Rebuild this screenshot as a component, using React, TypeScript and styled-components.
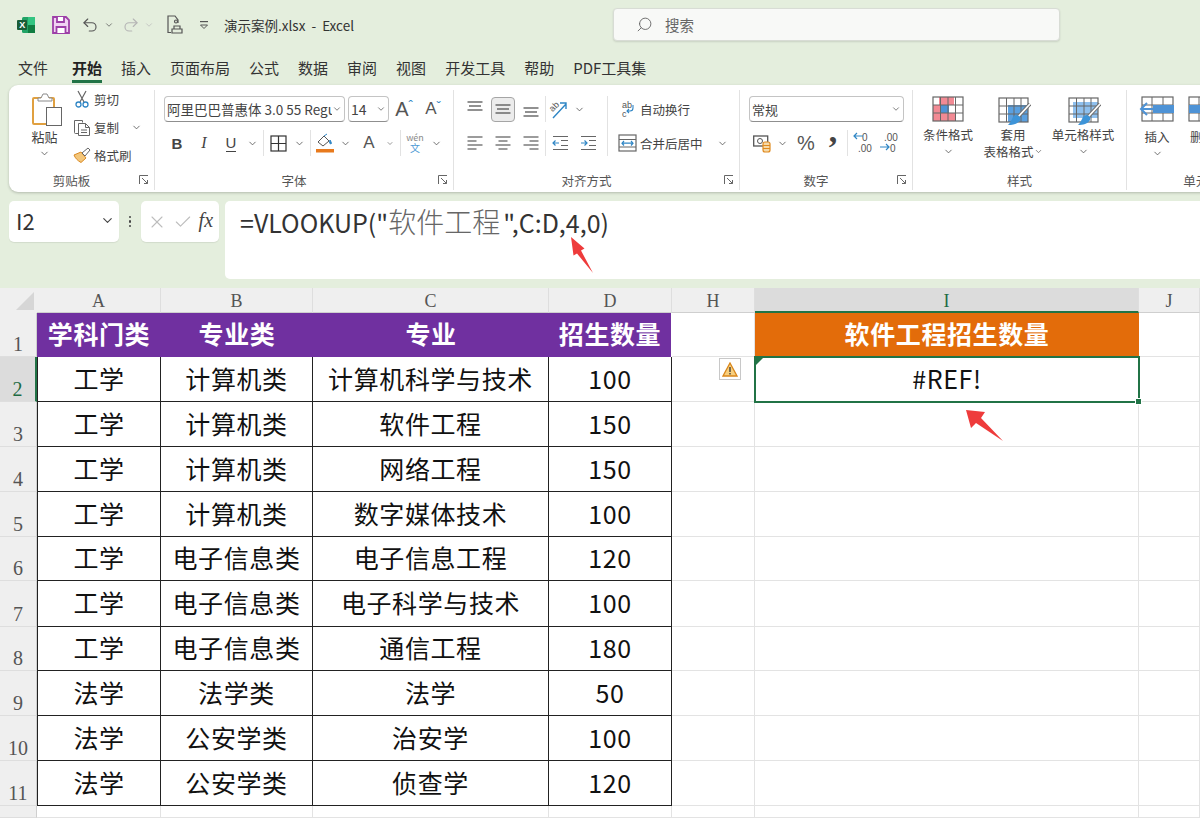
import React from 'react';
import styled, {createGlobalStyle} from 'styled-components';
import {ChevronDown, Search, Undo2, Redo2, X, Check} from 'lucide-react';

const sans = `"Noto Sans CJK SC", "Noto Sans", sans-serif`;

const GlobalStyle = createGlobalStyle`
  html, body { margin:0; padding:0; background:#e4eedd; }
  body { font-family:${sans}; color:#333; }
`;

const rowHeights = [44,45,45,45,45,44,46,44,45,45,45];
const tableHead = ['学科门类','专业类','专业','招生数量'];
const tableRows = [
  ['工学','计算机类','计算机科学与技术','100'],
  ['工学','计算机类','软件工程','150'],
  ['工学','计算机类','网络工程','150'],
  ['工学','计算机类','数字媒体技术','100'],
  ['工学','电子信息类','电子信息工程','120'],
  ['工学','电子信息类','电子科学与技术','100'],
  ['工学','电子信息类','通信工程','180'],
  ['法学','法学类','法学','50'],
  ['法学','公安学类','治安学','100'],
  ['法学','公安学类','侦查学','120'],
];

function Chev({size=11,color='#555'}:{size?:number,color?:string}){
  return <ChevronDown size={size} color={color} strokeWidth={1.8}/>;
}

function PasteIcon(){
  return (
    <svg width="30" height="33" viewBox="0 0 30 33" fill="none">
      <path d="M5 5h16a1 1 0 0 1 1 1v24a1 1 0 0 1-1 1H2a1 1 0 0 1-1-1V6a1 1 0 0 1 1-1z" stroke="#e0a040" strokeWidth="2"/>
      <path d="M6 8V5h3l2-4h4l2 4h3v3z" fill="#fff" stroke="#8a8a8a"/>
      <rect x="14.5" y="14.5" width="15" height="18" fill="#fff" stroke="#666"/>
    </svg>
  );
}
function ScissorsIcon(){
  return (
    <svg width="14" height="18" viewBox="0 0 14 18" fill="none">
      <path d="M3 1l6 11M11 1L5 12" stroke="#666" strokeWidth="1.2"/>
      <circle cx="3.5" cy="14.5" r="2.5" stroke="#2f86c5" strokeWidth="1.3"/>
      <circle cx="10.5" cy="14.5" r="2.5" stroke="#2f86c5" strokeWidth="1.3"/>
    </svg>
  );
}
function CopyIcon(){
  return (
    <svg width="18" height="17" viewBox="0 0 18 17" fill="none" stroke="#666">
      <path d="M5.5 14.5h-3a1 1 0 0 1-1-1v-12h8v2"/>
      <path d="M5.5 4.5h7l4 4v8h-11z" fill="#fff"/>
      <path d="M12.5 4.5v4h4M8 11h6M8 13.5h6"/>
    </svg>
  );
}
function BrushIcon(){
  return (
    <svg width="18" height="16" viewBox="0 0 18 16" fill="none">
      <path d="M1 8l7-3 5 6-5 4.500C5 14 2 11 1 8z" fill="#f3c67a" stroke="#d98a25"/>
      <path d="M9 6l6-5 2 2-5 6z" fill="#fff" stroke="#666"/>
    </svg>
  );
}
function BordersIcon(){
  return (
    <svg width="17" height="17" viewBox="0 0 17 17" fill="none" stroke="#333" strokeWidth="1.2">
      <rect x="1" y="1" width="15" height="15"/><path d="M8.500 1v15M1 8.500h15"/>
    </svg>
  );
}
function FillIcon(){
  return (
    <svg width="18" height="20" viewBox="0 0 18 20" fill="none">
      <path d="M2 9l6-6 5 5-6 5z" fill="#fff" stroke="#555"/>
      <path d="M8 3l3-2M14 7c1 2 2 3 1 4-1 0-2-1-1-4z" stroke="#2f86c5" fill="#2f86c5"/>
      <rect x="0" y="16" width="18" height="3.500" fill="#e87a1d"/>
    </svg>
  );
}
function AlignLines({kind}:{kind:'top'|'mid'|'bot'}){
  const y = kind === 'top' ? [2,6,10] : kind === 'mid' ? [5,9,13] : [8,12,16];
  return (
    <svg width="16" height="18" viewBox="0 0 16 18" stroke="#555" strokeWidth="1.3">
      {y.map((v,i) => <line key={i} x1={i===1?2:0.5} x2={i===1?14:15.5} y1={v} y2={v}/>)}
    </svg>
  );
}
function HAlign({kind}:{kind:'l'|'c'|'r'}){
  const w = [15,9,15,9];
  return (
    <svg width="16" height="14" viewBox="0 0 16 14" stroke="#666" strokeWidth="1.3">
      {w.map((v,i) => {
        const x1 = kind === 'l' ? 0.5 : kind === 'c' ? (16-v)/2 : 15.5-v;
        return <line key={i} x1={x1} x2={x1+v} y1={1+i*4} y2={1+i*4}/>;
      })}
    </svg>
  );
}
function OrientIcon(){
  return (
    <svg width="20" height="20" viewBox="0 0 20 20" fill="none">
      <path d="M4 19L17 5M11 4h6v6" stroke="#2f86c5" strokeWidth="1.4"/>
      <text x="1" y="11" fontSize="9" fill="#555" fontFamily="Liberation Sans" transform="rotate(-45 5 9)">ab</text>
    </svg>
  );
}
function IndentIcon({dir}:{dir:'out'|'in'}){
  return (
    <svg width="17" height="16" viewBox="0 0 17 16" fill="none" stroke="#666" strokeWidth="1.2">
      <path d="M1 1.500h15M1 14.500h15M9 5.500h7M9 10.500h7"/>
      <path d={dir === 'out' ? 'M7 8H1M3.500 5.500L1 8l2.500 2.500' : 'M1 8h6M4.500 5.500L7 8l-2.500 2.500'} stroke="#2f86c5"/>
    </svg>
  );
}
function WrapIcon(){
  return (
    <svg width="19" height="18" viewBox="0 0 19 18" fill="none">
      <text x="4" y="8" fontSize="9" fill="#555" fontFamily="Liberation Sans">ab</text>
      <text x="4" y="17" fontSize="9" fill="#555" fontFamily="Liberation Sans">c</text>
      <path d="M15 5v3a3 3 0 0 1-3 3H9M11 9l-2 2 2 2" stroke="#2f86c5" strokeWidth="1.1"/>
    </svg>
  );
}
function MergeIcon(){
  return (
    <svg width="19" height="18" viewBox="0 0 19 18" fill="none" stroke="#2f86c5" strokeWidth="1.2">
      <rect x="1" y="1" width="17" height="16" stroke="#666"/>
      <path d="M1 5.500h17M1 13h17" stroke="#666"/>
      <path d="M4 9.200h11M6 7l-2 2.200L6 11.500M13 7l2 2.200-2 2.300"/>
    </svg>
  );
}
function AccountingIcon(){
  return (
    <svg width="18" height="20" viewBox="0 0 18 20" fill="none">
      <rect x="0.700" y="3" width="14" height="10" stroke="#555" strokeWidth="1.300"/>
      <circle cx="7" cy="8" r="2.500" stroke="#555"/>
      <rect x="10" y="9" width="7" height="10" rx="2" fill="#f5d9a8" stroke="#e08a1e" strokeWidth="1.200"/>
      <path d="M10 12.500h7M10 15.500h7" stroke="#e08a1e"/>
    </svg>
  );
}
function DecimalIcon({up}:{up:boolean}){
  return (
    <svg width="25" height="24" viewBox="0 0 25 24" fill="none">
      <text x={up?6:10} y="10" fontSize="10" fill="#555" fontFamily="Liberation Sans">{up?'.00':'0'}</text>
      <text x={up?12:6} y="21" fontSize="10" fill="#555" fontFamily="Liberation Sans">{up?'0':'.00'}</text>
      <path d={up ? 'M2 16h9M8 13l3 3-3 3' : 'M11 5H2M5 2L2 5l3 3'} stroke="#2f86c5" strokeWidth="1.200"/>
    </svg>
  );
}
function BrushOverlay(){
  return (
    <g>
      <path d="M35 8L22 22" stroke="#6e6e6e" strokeWidth="3.600"/>
      <path d="M35 8L22 22" stroke="#fff" strokeWidth="1.800"/>
      <path d="M22 19c3 1 4 3 3 5-2 4-7 5-12 5 2-2 3-4 4-6 1-3 3-4 5-4z" fill="#3d94d8"/>
    </g>
  );
}
function StyleTableIcon({fill,x,y,w,h}:{fill:string,x:number,y:number,w:number,h:number}){
  return (
    <svg width="36" height="30" viewBox="0 0 36 30" fill="none">
      <rect x={x} y={y} width={w} height={h} fill={fill}/>
      <rect x="4" y="2" width="29" height="24" stroke="#666" strokeWidth="1.200"/>
      <path d="M11.500 2v24M19 2v24M26 2v24M4 10h29M4 18h29" stroke="#666"/>
      <BrushOverlay/>
    </svg>
  );
}
function CondIcon(){
  return (
    <svg width="32" height="26" viewBox="0 0 32 26" fill="none">
      <rect x="7" y="1" width="15" height="8" fill="#f28a94"/>
      <rect x="1" y="17" width="22" height="8" fill="#f28a94"/>
      <rect x="1" y="9" width="7" height="8" fill="#f28a94"/>
      <rect x="8" y="9" width="9" height="8" fill="#4e93d6"/>
      <rect x="1" y="1" width="30" height="24" stroke="#666" strokeWidth="1.200"/>
      <path d="M8.500 1v24M16 1v24M23.500 1v24M1 9h30M1 17h30" stroke="#666"/>
    </svg>
  );
}
function InsertIcon(){
  return (
    <svg width="36" height="26" viewBox="0 0 36 26" fill="none">
      <rect x="3" y="1" width="31" height="24" stroke="#666" strokeWidth="1.200"/>
      <path d="M13 1v24M24 1v24M3 9h31M3 17h31" stroke="#666"/>
      <rect x="14" y="9" width="21" height="8" fill="#4e93d6"/>
      <path d="M14 13H3M8 7l-6 6 6 6" stroke="#4e93d6" strokeWidth="2" fill="none"/>
    </svg>
  );
}
function DeleteIcon(){
  return (
    <svg width="30" height="26" viewBox="0 0 30 26" fill="none">
      <rect x="1" y="1" width="31" height="24" stroke="#666" strokeWidth="1.200"/>
      <path d="M11 1v24M22 1v24M1 9h31M1 17h31" stroke="#666"/>
      <rect x="1" y="9" width="21" height="8" fill="#4e93d6"/>
    </svg>
  );
}
function LauncherIcon(){
  return (
    <svg width="10" height="10" viewBox="0 0 10 10" fill="none" stroke="#666">
      <path d="M0.500 9V0.500H9M3 3l5.500 5.500M8.500 5v3.500H5"/>
    </svg>
  );
}
function ExcelLogo(){
  return (
    <svg width="18" height="18" viewBox="0 0 18 18">
      <rect x="5" y="1" width="13" height="16" rx="1.500" fill="#21a366"/>
      <rect x="11" y="1" width="7" height="8" fill="#33c481"/>
      <rect x="11" y="9" width="7" height="8" fill="#107c41"/>
      <rect x="0" y="4" width="10" height="10" rx="1" fill="#185c37"/>
      <text x="2.300" y="12" fontSize="9" fontWeight="700" fill="#fff" fontFamily="Liberation Sans">X</text>
    </svg>
  );
}
function SaveIcon(){
  return (
    <svg width="18" height="18" viewBox="0 0 18 18" fill="#f1d3f3" stroke="#9d3fa8" strokeWidth="1.800">
      <path d="M1 1h13l3 3v13H1z"/>
      <path d="M5 1v5h7V1M4.500 17v-6h9v6" fill="#fff"/>
    </svg>
  );
}
function PreviewIcon(){
  return (
    <svg width="16" height="19" viewBox="0 0 16 19" fill="none" stroke="#555" strokeWidth="1.200">
      <path d="M4 17.500H1V1h7l3 4v3"/>
      <path d="M5 14h10v4H5zM7 14v-3h6v3"/>
      <circle cx="9" cy="6.500" r="1.500"/>
    </svg>
  );
}
function QuickMenuIcon(){
  return (
    <svg width="10" height="10" viewBox="0 0 10 10" fill="#555">
      <rect x="1" y="1" width="8" height="1.200"/>
      <path d="M1.500 5h7L5 8.500z" fill="none" stroke="#555"/>
    </svg>
  );
}
function WarnIcon(){
  return (
    <svg width="16" height="15" viewBox="0 0 16 15">
      <path d="M8 1l7 13H1z" fill="#f8cf7e" stroke="#d9861a" strokeWidth="1.300"/>
      <path d="M8 5v5M8 11v1.500" stroke="#333" strokeWidth="1.300"/>
    </svg>
  );
}

export default function App(){
  return (
    <>
      <GlobalStyle/>
      <Page>
        <TitleBar>
          <TitleLeft>
            <ExcelLogo/>
            <QuickSlot $w={18} $ml={17}><SaveIcon/></QuickSlot>
            <QuickSlot $w={18} $ml={11}><Undo2 size={18} color="#555" strokeWidth={1.500}/></QuickSlot>
            <QuickSlot $w={12} $ml={4}><Chev size={10}/></QuickSlot>
            <QuickSlot $w={18} $ml={7}><Redo2 size={18} color="#b5b5b5" strokeWidth={1.500}/></QuickSlot>
            <QuickSlot $w={10} $ml={4}><Chev size={10} color="#bbb"/></QuickSlot>
            <QuickSlot $w={16} $ml={13}><PreviewIcon/></QuickSlot>
            <QuickSlot $w={10} $ml={16}><QuickMenuIcon/></QuickSlot>
            <FileName>演示案例.xlsx&nbsp; - &nbsp;Excel</FileName>
          </TitleLeft>
          <SearchBox>
            <MirrorIcon><Search size={17} color="#666" strokeWidth={1.300}/></MirrorIcon>
            <span>搜索</span>
          </SearchBox>
        </TitleBar>

        <Tabs>
          {['文件','开始','插入','页面布局','公式','数据','审阅','视图','开发工具','帮助','PDF工具集'].map(t => (
            <Tab key={t} $active={t === '开始'}>{t}</Tab>
          ))}
        </Tabs>

        <Ribbon>
          <Group $w={146}>
            <GroupBody>
              <ClipRow>
                <PasteCol>
                  <PasteIconWrap><PasteIcon/></PasteIconWrap>
                  <PasteLabel>粘贴</PasteLabel>
                  <Chev/>
                </PasteCol>
                <ClipCol>
                  <ClipItem><ClipIcon><ScissorsIcon/></ClipIcon>剪切</ClipItem>
                  <ClipItem><ClipIcon><CopyIcon/></ClipIcon>复制<ClipChev><Chev/></ClipChev></ClipItem>
                  <ClipItem><ClipIcon><BrushIcon/></ClipIcon>格式刷</ClipItem>
                </ClipCol>
              </ClipRow>
            </GroupBody>
            <GroupFooter><FooterLabel>剪贴板</FooterLabel><Launcher><LauncherIcon/></Launcher></GroupFooter>
          </Group>

          <Group $w={299}>
            <GroupBody $pl={9} $pt={6}>
              <ToolRow>
                <SelectBox $w={181}><SelectText $size={13.500}>阿里巴巴普惠体 3.0 55 Regular</SelectText><Chev size={10}/></SelectBox>
                <SelectBox $w={41} $ml={3}><SelectText $size={14}>14</SelectText><Chev size={10}/></SelectBox>
                <Tool $w={30}><GrowA $size={20}>A<Caret>ˆ</Caret></GrowA></Tool>
                <Tool $w={28}><GrowA $size={17}>A<Caret>ˇ</Caret></GrowA></Tool>
              </ToolRow>
              <ToolRow $mt={8}>
                <Tool $w={26}><BoldB>B</BoldB></Tool>
                <Tool $w={28}><ItalicI>I</ItalicI></Tool>
                <Tool $w={26}><UnderU>U</UnderU></Tool>
                <Tool $w={16}><Chev/></Tool>
                <ToolSep $w={6}/>
                <Tool $w={24}><BordersIcon/></Tool>
                <Tool $w={18}><Chev/></Tool>
                <ToolSep $w={4}/>
                <Tool $w={26}><FillIcon/></Tool>
                <Tool $w={14}><Chev/></Tool>
                <Tool $w={34}><FontA>A</FontA></Tool>
                <Tool $w={8}><Chev/></Tool>
                <ToolSep $w={12}/>
                <Tool $w={18}><WenIcon><span>wén</span><b>文</b></WenIcon></Tool>
                <Tool $w={24}><Chev/></Tool>
              </ToolRow>
            </GroupBody>
            <GroupFooter><FooterLabel>字体</FooterLabel><Launcher><LauncherIcon/></Launcher></GroupFooter>
          </Group>

          <Group $w={286}>
            <GroupBody $pl={7} $pt={6}>
              <AlignBody>
                <AlignCol>
                  <ToolRow>
                    <Tool $w={28}><AlignLines kind="top"/></Tool>
                    <Tool $w={28}><Pressed><AlignLines kind="mid"/></Pressed></Tool>
                    <Tool $w={28}><AlignLines kind="bot"/></Tool>
                    <ToolSep $w={1}/>
                    <Tool $w={26}><OrientIcon/></Tool>
                    <Tool $w={14}><Chev/></Tool>
                  </ToolRow>
                  <ToolRow $mt={8}>
                    <Tool $w={28}><HAlign kind="l"/></Tool>
                    <Tool $w={28}><HAlign kind="c"/></Tool>
                    <Tool $w={28}><HAlign kind="r"/></Tool>
                    <ToolSep $w={1}/>
                    <Tool $w={29}><IndentIcon dir="out"/></Tool>
                    <Tool $w={27}><IndentIcon dir="in"/></Tool>
                  </ToolRow>
                </AlignCol>
                <AlignDivider/>
                <AlignCol>
                  <TextTool><WrapIcon/><span>自动换行</span></TextTool>
                  <TextTool $mt={8}><MergeIcon/><span>合并后居中</span><ClipChev $ml={11}><Chev/></ClipChev></TextTool>
                </AlignCol>
              </AlignBody>
            </GroupBody>
            <GroupFooter><FooterLabel>对齐方式</FooterLabel><Launcher><LauncherIcon/></Launcher></GroupFooter>
          </Group>

          <Group $w={173}>
            <GroupBody $pl={9} $pt={6}>
              <ToolRow>
                <SelectBox $w={155}><SelectText>常规</SelectText><Chev size={10}/></SelectBox>
              </ToolRow>
              <ToolRow $mt={8}>
                <Tool $w={26}><AccountingIcon/></Tool>
                <Tool $w={14}><Chev/></Tool>
                <Tool $w={34}><Percent>%</Percent></Tool>
                <Tool $w={20}><Comma>,</Comma></Tool>
                <ToolSep $w={8}/>
                <Tool $w={26}><DecimalIcon up={false}/></Tool>
                <Tool $w={26}><DecimalIcon up={true}/></Tool>
              </ToolRow>
            </GroupBody>
            <GroupFooter><FooterLabel>数字</FooterLabel><Launcher><LauncherIcon/></Launcher></GroupFooter>
          </Group>

          <Group $w={214}>
            <GroupBody $pt={6}>
              <LargeRow>
                <LargeButton $w={70}>
                  <LargeIcon><CondIcon/></LargeIcon>
                  <LargeLabel>条件格式</LargeLabel>
                  <LargeChev><Chev/></LargeChev>
                </LargeButton>
                <LargeButton $w={60}>
                  <LargeIcon><StyleTableIcon fill="#5aa0e0" x={13} y={9} w={20} h={17}/></LargeIcon>
                  <LargeLabel>套用</LargeLabel>
                  <LargeLabel>表格格式 <Chev size={9}/></LargeLabel>
                </LargeButton>
                <LargeButton $w={80}>
                  <LargeIcon><StyleTableIcon fill="#8fc0ee" x={8} y={6} w={25} h={16}/></LargeIcon>
                  <LargeLabel>单元格样式</LargeLabel>
                  <LargeChev><Chev/></LargeChev>
                </LargeButton>
              </LargeRow>
            </GroupBody>
            <GroupFooter><FooterLabel>样式</FooterLabel></GroupFooter>
          </Group>

          <Group $w={150} $last>
            <GroupBody $pt={6}>
              <LargeRow>
                <LargeButton $w={60}>
                  <LargeIcon $h={32}><InsertIcon/></LargeIcon>
                  <LargeLabel>插入</LargeLabel>
                  <LargeChev><Chev/></LargeChev>
                </LargeButton>
                <LargeButton $w={31}>
                  <LargeIcon $h={32}><DeleteIcon/></LargeIcon>
                  <LargeLabel>删除</LargeLabel>
                </LargeButton>
              </LargeRow>
            </GroupBody>
            <GroupFooter><FooterLabel>单元格</FooterLabel></GroupFooter>
          </Group>
        </Ribbon>

        <FormulaBar>
          <NameBox><span>I2</span><Chev size={15} color="#444"/></NameBox>
          <Dots><i/><i/><i/></Dots>
          <FxBox>
            <X size={20} color="#bdbdbd" strokeWidth={1.300}/>
            <Check size={20} color="#bdbdbd" strokeWidth={1.300}/>
            <FxText>fx</FxText>
          </FxBox>
          <FormulaInput>=VLOOKUP("<FormulaCjk>软件工程</FormulaCjk>",C:D,4,0)</FormulaInput>
        </FormulaBar>

        <Sheet>
          <Corner><CornerTriangle/></Corner>
          {['A','B','C','D','H','I','J'].map(c => <ColHead key={c} $active={c === 'I'}>{c}</ColHead>)}

          {rowHeights.map((_, r) => (
            <React.Fragment key={r}>
              <RowHead $active={r === 1}>{r + 1}</RowHead>
              {r === 0 && tableHead.map(h => <HeadCell key={h}>{h}</HeadCell>)}
              {r > 0 && tableRows[r - 1].map((v, i) => <DataCell key={i} $first={i === 0}>{v}</DataCell>)}
              <BlankCell>
                {r === 1 && <WarnBadge><WarnIcon/></WarnBadge>}
              </BlankCell>
              {r === 0 && <OrangeCell>软件工程招生数量</OrangeCell>}
              {r === 1 && <ActiveCell>#REF!<ErrorMark/><FillHandle/></ActiveCell>}
              {r > 1 && <BlankCell/>}
              <BlankCell/>
            </React.Fragment>
          ))}

          <RowHead/>
          {[0,1,2,3,4,5,6].map(i => <BlankCell key={i}/>)}

          <ArrowOne width="26" height="40" viewBox="0 0 26 40">
            <path d="M1 1L14.500 12.500L11 14.500L23 37L7 17.500L3.500 19.500Z" fill="#ee3b3b"/>
          </ArrowOne>
          <ArrowTwo width="40" height="34" viewBox="0 0 40 34">
            <path d="M1 1L20 3 16 9 38 32 11 14 6 19z" fill="#ee3b3b"/>
          </ArrowTwo>
        </Sheet>
      </Page>
    </>
  );
}

const Page = styled.div`
  position:relative;
  width:1200px;
  height:818px;
  overflow:hidden;
  background:#e4eedd;
  display:flex;
  flex-direction:column;
`;

const TitleBar = styled.div`
  height:49px;
  display:flex;
  align-items:center;
  flex:none;
`;
const TitleLeft = styled.div`
  width:613px;
  padding-left:17px;
  box-sizing:border-box;
  display:flex;
  align-items:center;
`;
const QuickSlot = styled.div<{$w:number,$ml:number}>`
  width:${p => p.$w}px;
  margin-left:${p => p.$ml}px;
  display:flex;
  justify-content:center;
  align-items:center;
`;
const FileName = styled.div`
  margin-left:15px;
  font-size:13.5px;
  color:#333;
  white-space:nowrap;
`;
const SearchBox = styled.div`
  width:447px;
  height:33px;
  box-sizing:border-box;
  background:#f8f9f7;
  border:1px solid #d8dcd5;
  border-radius:4px;
  box-shadow:0 1px 2px rgba(0,0,0,0.12);
  display:flex;
  align-items:center;
  padding-left:22px;
  gap:12px;
  font-size:14.5px;
  color:#666;
`;
const MirrorIcon = styled.div`
  display:flex;
  transform:scaleX(-1);
`;

const Tabs = styled.div`
  height:36px;
  padding-left:18px;
  display:flex;
  gap:19px;
  flex:none;
  & > :first-child{
    margin-right:5px;
  }
`;
const Tab = styled.div<{$active?:boolean}>`
  height:24px;
  margin-top:7px;
  line-height:24px;
  font-size:15px;
  white-space:nowrap;
  color:${p => p.$active ? '#222' : '#333'};
  font-weight:${p => p.$active ? 700 : 400};
  border-bottom:${p => p.$active ? '3px solid #217346' : '3px solid transparent'};
`;

const Ribbon = styled.div`
  margin-left:9px;
  width:1300px;
  height:107px;
  box-sizing:border-box;
  padding:5px 0 2px;
  background:#fff;
  border-radius:9px 0 0 9px;
  box-shadow:0 1px 3px rgba(0,0,0,0.22);
  display:flex;
  flex:none;
  font-size:12.5px;
  color:#444;
`;
const Group = styled.div<{$w:number,$last?:boolean}>`
  width:${p => p.$w}px;
  flex:none;
  box-sizing:border-box;
  display:flex;
  flex-direction:column;
  border-right:${p => p.$last ? 'none' : '1px solid #e2e2e2'};
`;
const GroupBody = styled.div<{$pl?:number,$pt?:number}>`
  height:81px;
  box-sizing:border-box;
  padding-left:${p => p.$pl ?? 0}px;
  padding-top:${p => p.$pt ?? 0}px;
`;
const GroupFooter = styled.div`
  height:18px;
  display:flex;
  align-items:center;
`;
const FooterLabel = styled.div`
  flex:1;
  text-align:center;
  white-space:nowrap;
  color:#555;
`;
const Launcher = styled.div`
  width:20px;
  display:flex;
  justify-content:center;
`;

const ClipRow = styled.div`
  display:flex;
`;
const PasteCol = styled.div`
  width:61px;
  box-sizing:border-box;
  padding-left:10px;
  display:flex;
  flex-direction:column;
  align-items:center;
`;
const PasteIconWrap = styled.div`
  box-sizing:border-box;
  height:35px;
  margin-left:4px;
  padding-top:3px;
`;
const PasteLabel = styled.div`
  margin-top:1px;
  font-size:13px;
  line-height:22px;
`;
const ClipCol = styled.div`
  display:flex;
  flex-direction:column;
  gap:8px;
  margin-top:-1px;
`;
const ClipItem = styled.div`
  height:20px;
  display:flex;
  align-items:center;
  white-space:nowrap;
`;
const ClipIcon = styled.div`
  width:24px;
  display:flex;
  justify-content:center;
`;
const ClipChev = styled.div<{$ml?:number}>`
  margin-left:${p => p.$ml ?? 12}px;
  display:flex;
`;

const ToolRow = styled.div<{$mt?:number}>`
  display:flex;
  align-items:center;
  height:26px;
  margin-top:${p => p.$mt ?? 0}px;
`;
const Tool = styled.div<{$w:number}>`
  width:${p => p.$w}px;
  height:26px;
  flex:none;
  display:flex;
  align-items:center;
  justify-content:center;
`;
const ToolSep = styled.div<{$w:number}>`
  width:${p => p.$w}px;
  height:26px;
  flex:none;
  &::after{
    content:'';
    display:block;
    width:1px;
    height:100%;
    margin:0 auto;
    background:#e2e2e2;
  }
`;
const SelectBox = styled.div<{$w:number,$ml?:number}>`
  width:${p => p.$w}px;
  height:26px;
  margin-left:${p => p.$ml ?? 0}px;
  flex:none;
  box-sizing:border-box;
  border:1px solid #c4c4c4;
  border-bottom-color:#8f8f8f;
  border-radius:4px;
  display:flex;
  align-items:center;
  justify-content:space-between;
  padding:0 2px;
  overflow:hidden;
`;
const SelectText = styled.div<{$size?:number}>`
  flex:1;
  min-width:0;
  overflow:hidden;
  white-space:nowrap;
  font-size:${p => p.$size ?? 13}px;
  color:#444;
`;
const GrowA = styled.div<{$size:number}>`
  display:flex;
  font-family:"Liberation Sans", sans-serif;
  font-size:${p => p.$size}px;
  color:#555;
`;
const Caret = styled.span`
  font-size:13px;
  line-height:15px;
  color:#2f86c5;
`;
const BoldB = styled.div`
  font-family:"Liberation Sans", sans-serif;
  font-weight:700;
  font-size:15px;
  color:#444;
`;
const ItalicI = styled.div`
  font-family:"Liberation Serif", serif;
  font-style:italic;
  font-size:16px;
  color:#444;
`;
const UnderU = styled.div`
  font-family:"Liberation Sans", sans-serif;
  font-size:15px;
  line-height:16px;
  color:#444;
  border-bottom:1px solid #444;
`;
const FontA = styled.div`
  font-family:"Liberation Sans", sans-serif;
  font-size:17px;
  color:#555;
`;
const WenIcon = styled.div`
  display:flex;
  flex-direction:column;
  align-items:center;
  line-height:9px;
  font-size:9px;
  color:#888;
  & > b{
    font-weight:400;
    font-size:10px;
    line-height:11px;
    color:#4d9ad5;
  }
`;
const Pressed = styled.div`
  width:24px;
  height:25px;
  box-sizing:border-box;
  background:#ececec;
  border:1px solid #a5a5a5;
  border-radius:4px;
  display:flex;
  align-items:center;
  justify-content:center;
`;
const AlignBody = styled.div`
  display:flex;
`;
const AlignCol = styled.div`
  display:flex;
  flex-direction:column;
`;
const AlignDivider = styled.div`
  width:1px;
  height:60px;
  margin:0 10px 0 5px;
  background:#e2e2e2;
`;
const TextTool = styled.div<{$mt?:number}>`
  height:26px;
  margin-top:${p => p.$mt ?? 0}px;
  display:flex;
  align-items:center;
  gap:3px;
  white-space:nowrap;
`;
const Percent = styled.div`
  font-family:"Liberation Sans", sans-serif;
  font-size:20px;
  color:#555;
`;
const Comma = styled.div`
  font-family:"Liberation Serif", serif;
  font-weight:700;
  font-size:34px;
  line-height:30px;
  margin-top:-24px;
  color:#444;
`;
const LargeRow = styled.div`
  display:flex;
`;
const LargeButton = styled.div<{$w:number}>`
  width:${p => p.$w}px;
  flex:none;
  display:flex;
  flex-direction:column;
  align-items:center;
`;
const LargeIcon = styled.div<{$h?:number}>`
  height:${p => p.$h ?? 30}px;
`;
const LargeLabel = styled.div`
  height:17px;
  line-height:17px;
  white-space:nowrap;
  display:flex;
  align-items:center;
`;
const LargeChev = styled.div`
  height:17px;
  display:flex;
  align-items:center;
`;

const FormulaBar = styled.div`
  height:88px;
  margin-top:8px;
  padding-left:9px;
  display:flex;
  flex:none;
`;
const NameBox = styled.div`
  width:110px;
  height:41px;
  box-sizing:border-box;
  margin-top:1px;
  background:#fff;
  border-radius:5px;
  box-shadow:0 1px 1px rgba(0,0,0,0.08);
  padding:0 4px 3px 7px;
  display:flex;
  align-items:center;
  justify-content:space-between;
  font-size:22px;
  color:#333;
`;
const Dots = styled.div`
  width:22px;
  height:41px;
  margin-top:1px;
  display:flex;
  flex-direction:column;
  align-items:center;
  justify-content:center;
  gap:2px;
  & > i{
    width:2.500px;
    height:2.500px;
    border-radius:50%;
    background:#444;
  }
`;
const FxBox = styled.div`
  width:78px;
  height:41px;
  box-sizing:border-box;
  margin-top:1px;
  background:#fff;
  border-radius:5px;
  box-shadow:0 1px 1px rgba(0,0,0,0.08);
  padding:0 3px 0 3px;
  display:flex;
  align-items:center;
  justify-content:space-around;
`;
const FxText = styled.div`
  font-family:"Liberation Serif", serif;
  font-style:italic;
  font-size:20px;
  color:#444;
  margin-top:-3px;
`;
const FormulaInput = styled.div`
  width:975px;
  height:78px;
  box-sizing:border-box;
  margin:1px 0 0 6px;
  background:#fff;
  border-radius:5px 0 0 5px;
  padding:2px 0 0 15px;
  font-size:25px;
  line-height:36px;
  color:#333;
  white-space:nowrap;
`;
const FormulaCjk = styled.span`
  margin:0 3px 0 0;
  font-size:28px;
  font-weight:300;
  color:#666;
`;

const Sheet = styled.div`
  position:relative;
  flex:none;
  display:grid;
  grid-template-columns:37px 124px 152px 236px 123px 83px 384px 61px;
  grid-template-rows:25px ${rowHeights.map(h => `${h}px`).join(' ')} 12px;
  background:#fff;
`;
const Corner = styled.div`
  background:#efefef;
  display:flex;
  align-items:flex-end;
  justify-content:flex-end;
  padding:0 3px 3px 0;
  box-sizing:border-box;
`;
const CornerTriangle = styled.div`
  width:0;
  height:0;
  border-left:18px solid transparent;
  border-bottom:18px solid #d6d6d6;
`;
const ColHead = styled.div<{$active?:boolean}>`
  box-sizing:border-box;
  background:${p => p.$active ? '#dcdcdc' : '#efefef'};
  border-right:1px solid #dedede;
  border-bottom:${p => p.$active ? '2px solid #217346' : '1px solid #cfcfcf'};
  color:${p => p.$active ? '#1e6b43' : '#555'};
  font-family:"Liberation Serif", serif;
  font-size:18px;
  line-height:27px;
  text-align:center;
`;
const RowHead = styled.div<{$active?:boolean}>`
  box-sizing:border-box;
  background:${p => p.$active ? '#dcdcdc' : '#efefef'};
  border-bottom:1px solid #dedede;
  border-right:${p => p.$active ? '2px solid #217346' : '1px solid #cfcfcf'};
  color:${p => p.$active ? '#1e6b43' : '#555'};
  font-family:"Liberation Serif", serif;
  font-size:20px;
  line-height:22px;
  display:flex;
  align-items:flex-end;
  justify-content:center;
  padding-bottom:1px;
`;
const HeadCell = styled.div`
  box-sizing:border-box;
  background:#7030a0;
  color:#fff;
  font-weight:700;
  font-size:25px;
  letter-spacing:0.600px;
  padding-bottom:4px;
  display:flex;
  align-items:center;
  justify-content:center;
  white-space:nowrap;
  &:nth-child(13){
    margin-right:1px;
  }
`;
const DataCell = styled.div<{$first?:boolean}>`
  box-sizing:border-box;
  color:#111;
  font-size:25px;
  letter-spacing:0.600px;
  padding-bottom:3px;
  border-right:1px solid #222;
  border-bottom:1px solid #222;
  border-left:${p => p.$first ? '1px solid #222' : 'none'};
  display:flex;
  align-items:center;
  justify-content:center;
  white-space:nowrap;
`;
const BlankCell = styled.div`
  position:relative;
  box-sizing:border-box;
  border-right:1px solid #e3e3e3;
  border-bottom:1px solid #e3e3e3;
`;
const OrangeCell = styled.div`
  box-sizing:border-box;
  background:#e36c0a;
  color:#fff;
  font-weight:700;
  font-size:25px;
  letter-spacing:0.600px;
  padding-bottom:4px;
  display:flex;
  align-items:center;
  justify-content:center;
  white-space:nowrap;
`;
const ActiveCell = styled.div`
  position:relative;
  z-index:1;
  box-sizing:border-box;
  outline:2px solid #217346;
  outline-offset:-1px;
  color:#111;
  font-size:25px;
  letter-spacing:0.600px;
  padding-bottom:3px;
  display:flex;
  align-items:center;
  justify-content:center;
`;
const ErrorMark = styled.div`
  position:absolute;
  left:1px;
  top:1px;
  width:0;
  height:0;
  border-top:7px solid #217346;
  border-right:7px solid transparent;
`;
const FillHandle = styled.div`
  position:absolute;
  right:-3px;
  bottom:-3px;
  width:5px;
  height:5px;
  background:#217346;
  border:1px solid #fff;
`;
const WarnBadge = styled.div`
  position:absolute;
  left:47px;
  top:1px;
  width:22px;
  height:22px;
  box-sizing:border-box;
  background:#fff;
  border:1px solid #c8c8c8;
  display:flex;
  align-items:center;
  justify-content:center;
`;
const ArrowOne = styled.svg`
  position:absolute;
  left:570px;
  top:-52px;
  z-index:3;
`;
const ArrowTwo = styled.svg`
  position:absolute;
  left:965px;
  top:121px;
  z-index:3;
`;
